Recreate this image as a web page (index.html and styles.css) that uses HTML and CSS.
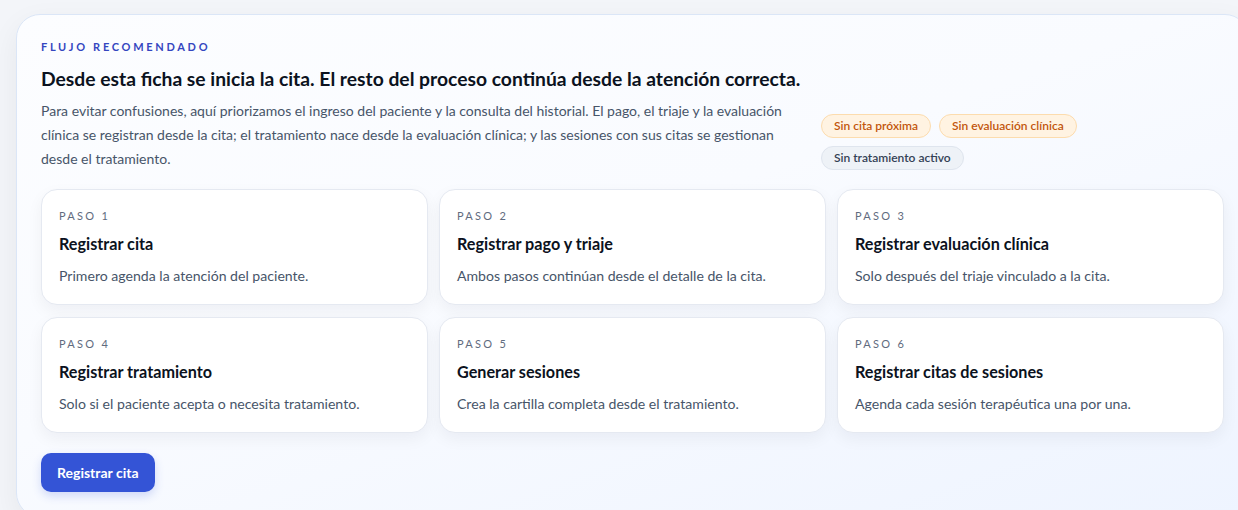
FILE: index.html
```html
<!DOCTYPE html>
<html lang="es">
<head>
  <meta charset="UTF-8">
  <meta name="viewport" content="width=device-width, initial-scale=1.0">
  <title>Flujo recomendado</title>
  <link rel="stylesheet" href="styles.css">
</head>
<body>
  <section class="flow-card">
    <p class="eyebrow">Flujo recomendado</p>
    <h2 class="flow-title">Desde esta ficha se inicia la cita. El resto del proceso continúa desde la atención correcta.</h2>
    <div class="flow-intro">
      <p class="flow-text">Para evitar confusiones, aquí priorizamos el ingreso del paciente y la consulta del historial. El pago, el triaje y la evaluación clínica se registran desde la cita; el tratamiento nace desde la evaluación clínica; y las sesiones con sus citas se gestionan desde el tratamiento.</p>
      <div class="badges">
        <span class="badge warn">Sin cita próxima</span>
        <span class="badge warn">Sin evaluación clínica</span>
        <span class="badge muted">Sin tratamiento activo</span>
      </div>
    </div>

    <div class="steps">
      <div class="step">
        <span class="step-num">Paso 1</span>
        <h3>Registrar cita</h3>
        <p>Primero agenda la atención del paciente.</p>
      </div>
      <div class="step">
        <span class="step-num">Paso 2</span>
        <h3>Registrar pago y triaje</h3>
        <p>Ambos pasos continúan desde el detalle de la cita.</p>
      </div>
      <div class="step">
        <span class="step-num">Paso 3</span>
        <h3>Registrar evaluación clínica</h3>
        <p>Solo después del triaje vinculado a la cita.</p>
      </div>
      <div class="step">
        <span class="step-num">Paso 4</span>
        <h3>Registrar tratamiento</h3>
        <p>Solo si el paciente acepta o necesita tratamiento.</p>
      </div>
      <div class="step">
        <span class="step-num">Paso 5</span>
        <h3>Generar sesiones</h3>
        <p>Crea la cartilla completa desde el tratamiento.</p>
      </div>
      <div class="step">
        <span class="step-num">Paso 6</span>
        <h3>Registrar citas de sesiones</h3>
        <p>Agenda cada sesión terapéutica una por una.</p>
      </div>
    </div>

    <button class="primary-btn">Registrar cita</button>
  </section>
</body>
</html>
```

FILE: styles.css
```css
* {
  margin: 0;
  padding: 0;
  box-sizing: border-box;
}

body {
  font-family: "Segoe UI", Lato, "Noto Sans", Arial, sans-serif;
  background-color: #f3f5f9;
  color: #0f172a;
  padding: 14px 0 0 16px;
  overflow: hidden;
  height: 510px;
}

.flow-card {
  width: 1233px;
  background: linear-gradient(160deg, #fcfdff 0%, #f9fbff 45%, #eef4ff 100%);
  border: 1px solid #dbe6f7;
  border-radius: 24px;
  padding: 24px;
  box-shadow: 0 10px 30px rgba(15, 23, 42, 0.06);
}

.eyebrow {
  font-size: 11px;
  font-weight: 700;
  letter-spacing: 2.7px;
  text-transform: uppercase;
  color: #3446c0;
  line-height: 16px;
}

.flow-title {
  font-size: 19.3px;
  font-weight: 700;
  line-height: 28px;
  margin-top: 10px;
  color: #0b1220;
}

.flow-intro {
  display: flex;
  align-items: flex-end;
  gap: 24px;
  margin-top: 6px;
}

.flow-text {
  flex: 1;
  font-size: 14px;
  line-height: 24px;
  color: #475569;
}

.badges {
  flex: 0 0 403px;
  display: flex;
  flex-wrap: wrap;
  gap: 8px;
  padding-bottom: 1px;
}

.badge {
  font-size: 12px;
  font-weight: 600;
  line-height: 22px;
  padding: 0 12px;
  border-radius: 999px;
  border: 1px solid transparent;
}

.badge.warn {
  background-color: #fff3e2;
  border-color: #fcdcae;
  color: #c2560c;
}

.badge.muted {
  background-color: #eef2f7;
  border-color: #dfe5ee;
  color: #334155;
}

.steps {
  display: grid;
  grid-template-columns: repeat(3, 1fr);
  gap: 12px 11px;
  margin-top: 18px;
}

.step {
  background-color: #ffffff;
  border: 1px solid #e5e9f1;
  border-radius: 16px;
  padding: 19px 17px 18px;
  height: 116px;
  box-shadow: 0 6px 16px rgba(15, 23, 42, 0.05);
}

.step-num {
  display: block;
  font-size: 11px;
  font-weight: 400;
  letter-spacing: 2.3px;
  text-transform: uppercase;
  color: #5f6b7e;
  line-height: 14px;
}

.step h3 {
  font-size: 16.2px;
  font-weight: 700;
  line-height: 20px;
  margin-top: 11px;
  color: #0b1220;
}

.step p {
  font-size: 14.1px;
  line-height: 20px;
  margin-top: 12px;
  color: #475569;
}

.primary-btn {
  margin-top: 20px;
  background-color: #3454d6;
  color: #ffffff;
  border: none;
  border-radius: 10px;
  font-family: inherit;
  font-size: 14px;
  font-weight: 700;
  padding: 0 16px;
  height: 39px;
  box-shadow: 0 4px 10px rgba(52, 84, 214, 0.2);
  cursor: pointer;
}
```
